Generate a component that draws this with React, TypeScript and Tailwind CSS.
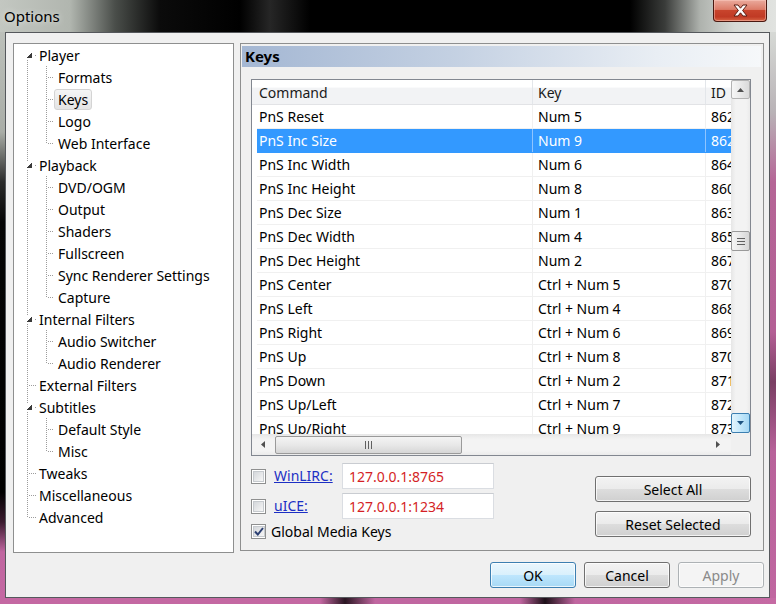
import React from "react";

type TreeNode = { label: string; children?: string[] };

const TREE: TreeNode[] = [
  { label: "Player", children: ["Formats", "Keys", "Logo", "Web Interface"] },
  { label: "Playback", children: ["DVD/OGM", "Output", "Shaders", "Fullscreen", "Sync Renderer Settings", "Capture"] },
  { label: "Internal Filters", children: ["Audio Switcher", "Audio Renderer"] },
  { label: "External Filters" },
  { label: "Subtitles", children: ["Default Style", "Misc"] },
  { label: "Tweaks" },
  { label: "Miscellaneous" },
  { label: "Advanced" },
];

interface TreeRow { label: string; child: boolean; parent: boolean; first: boolean; last: boolean; lastChild: boolean }

const treeRows: TreeRow[] = TREE.flatMap((n, i) => [
  { label: n.label, child: false, parent: !!n.children, first: i === 0, last: i === TREE.length - 1, lastChild: false },
  ...(n.children ?? []).map((c, j, arr) => ({
    label: c, child: true, parent: false, first: false, last: false, lastChild: j === arr.length - 1,
  })),
]);

const KEYS: [string, string, string][] = [
  ["PnS Reset", "Num 5", "862"],
  ["PnS Inc Size", "Num 9", "862"],
  ["PnS Inc Width", "Num 6", "864"],
  ["PnS Inc Height", "Num 8", "860"],
  ["PnS Dec Size", "Num 1", "863"],
  ["PnS Dec Width", "Num 4", "865"],
  ["PnS Dec Height", "Num 2", "867"],
  ["PnS Center", "Ctrl + Num 5", "870"],
  ["PnS Left", "Ctrl + Num 4", "868"],
  ["PnS Right", "Ctrl + Num 6", "869"],
  ["PnS Up", "Ctrl + Num 8", "870"],
  ["PnS Down", "Ctrl + Num 2", "871"],
  ["PnS Up/Left", "Ctrl + Num 7", "872"],
  ["PnS Up/Right", "Ctrl + Num 9", "873"],
];

const DOT = "#9c9c9c";

function TreeLines({ row }: { row: TreeRow }) {
  if (row.child) {
    return (
      <svg width="40" height="22" className="shrink-0" shapeRendering="crispEdges">
        <line x1="13.5" y1="0" x2="13.5" y2="22" stroke={DOT} strokeDasharray="1 1" />
        <line x1="32.5" y1="0" x2="32.5" y2={row.lastChild ? 12 : 22} stroke={DOT} strokeDasharray="1 1" />
        <line x1="34" y1="11.5" x2="40" y2="11.5" stroke={DOT} strokeDasharray="1 1" />
      </svg>
    );
  }
  if (row.parent) {
    return (
      <svg width="22" height="22" className="shrink-0" shapeRendering="crispEdges">
        {!row.first && <line x1="13.5" y1="0" x2="13.5" y2="8" stroke={DOT} strokeDasharray="1 1" />}
        <line x1="13.5" y1="16" x2="13.5" y2="22" stroke={DOT} strokeDasharray="1 1" />
        <polygon points="18,8 18,14 12,14" fill="#3a3a3a" />
        <rect x="21" y="11" width="1" height="1" fill={DOT} />
      </svg>
    );
  }
  return (
    <svg width="22" height="22" className="shrink-0" shapeRendering="crispEdges">
      <line x1="13.5" y1="0" x2="13.5" y2={row.last ? 12 : 22} stroke={DOT} strokeDasharray="1 1" />
      <line x1="15" y1="11.5" x2="22" y2="11.5" stroke={DOT} strokeDasharray="1 1" />
    </svg>
  );
}

function TreeView() {
  return (
    <div className="h-[510px] w-[221px] shrink-0 border border-[#8e8f8f] bg-white">
      {treeRows.map((r) => (
        <div key={r.label} className="flex h-[22px] items-center">
          <TreeLines row={r} />
          <span
            className={`h-[21px] whitespace-nowrap rounded-[3px] border leading-[19px] text-black ${r.child ? "px-[3px]" : "px-[2px]"} ${
              r.label === "Keys"
                ? "border-[#d4d4d4] bg-[linear-gradient(to_bottom,#f5f5f5,#e4e4e4)]"
                : "border-transparent"
            }`}
          >
            {r.label}
          </span>
        </div>
      ))}
    </div>
  );
}

function Arrow({ dir, color }: { dir: "up" | "down" | "left" | "right"; color: string }) {
  const d = {
    up: "M0 4 L3.5 0 L7 4 Z",
    down: "M0 0 L7 0 L3.5 4 Z",
    left: "M4 0 L4 7 L0 3.5 Z",
    right: "M0 0 L4 3.5 L0 7 Z",
  }[dir];
  const vertical = dir === "up" || dir === "down";
  return (
    <svg width={vertical ? 7 : 4} height={vertical ? 4 : 7}>
      <path d={d} fill={color} />
    </svg>
  );
}

function VScroll() {
  return (
    <div className="flex flex-col bg-[linear-gradient(to_right,#e6e6e6,#f3f3f3_25%,#f3f3f3_80%,#ebebeb)]">
      <div className="flex h-[19px] items-center justify-center rounded-[2px] border border-[#b3b3b3] bg-[linear-gradient(to_right,#f6f6f6,#e9e9e9_50%,#dadada)]">
        <Arrow dir="up" color="#505050" />
      </div>
      <div className="mt-[132px] flex h-[20px] items-center justify-center rounded-[2px] border border-[#9a9a9a] bg-[linear-gradient(to_right,#f4f4f4,#e8e8e8_50%,#d6d6d6)]">
        <svg width="8" height="7" shapeRendering="crispEdges">
          <path d="M0 0.5H8M0 3.5H8M0 6.5H8" stroke="#606060" />
        </svg>
      </div>
      <div className="flex-1" />
      <div className="mb-[1px] flex h-[20px] items-center justify-center rounded-[2px] border border-[#3c7fb1] bg-[linear-gradient(to_right,#e3f4fc,#c4e8fb_50%,#a6d8f4)]">
        <Arrow dir="down" color="#1d5381" />
      </div>
    </div>
  );
}

function HScroll() {
  return (
    <div className="flex items-center bg-[linear-gradient(to_bottom,#e6e6e6,#f3f3f3_25%,#f3f3f3_80%,#ebebeb)]">
      <div className="flex w-[21px] justify-center">
        <Arrow dir="left" color="#505050" />
      </div>
      <div className="ml-[2px] flex h-[18px] w-[187px] items-center justify-center rounded-[2px] border border-[#9a9a9a] bg-[linear-gradient(to_bottom,#f4f4f4,#e8e8e8_50%,#d6d6d6)]">
        <svg width="7" height="8" shapeRendering="crispEdges">
          <path d="M0.5 0V8M3.5 0V8M6.5 0V8" stroke="#606060" />
        </svg>
      </div>
      <div className="flex-1" />
      <div className="flex w-[26px] justify-center">
        <Arrow dir="right" color="#505050" />
      </div>
    </div>
  );
}

function ListView() {
  return (
    <div className="grid h-[377px] w-[500px] grid-cols-[479px_19px] grid-rows-[354px_21px] border border-[#828790] bg-white">
      <div className="overflow-hidden">
        <div className="flex h-[25px] w-[600px] border-b border-[#e2e3e6] bg-[linear-gradient(to_bottom,#ffffff_0%,#ffffff_30%,#f2f3f5_33%,#f2f3f5_100%)] leading-[25px] text-[#1a1a1a]">
          <div className="w-[281px] shrink-0 border-r border-[#e3e6ea] pl-[7px]">Command</div>
          <div className="w-[173px] shrink-0 border-r border-[#e3e6ea] pl-[5px]">Key</div>
          <div className="w-[60px] shrink-0 pl-[5px]">ID</div>
        </div>
        {KEYS.map(([cmd, key, id], i) => {
          const sel = i === 1;
          return (
            <div
              key={cmd}
              className={`ml-[5px] flex h-[24px] w-[600px] border-b leading-[23px] ${
                sel ? "border-[#3399ff] bg-[#3399ff] text-white" : "border-[#f0f0f0] text-black"
              }`}
            >
              <div className={`w-[276px] shrink-0 border-r pl-[2px] ${sel ? "border-[#8ec4ff]" : "border-[#f0f0f0]"}`}>{cmd}</div>
              <div className={`w-[173px] shrink-0 border-r pl-[5px] ${sel ? "border-[#8ec4ff]" : "border-[#f0f0f0]"}`}>{key}</div>
              <div className="w-[60px] shrink-0 pl-[5px]">{id}</div>
            </div>
          );
        })}
      </div>
      <VScroll />
      <HScroll />
      <div className="bg-[#f0f0f0]" />
    </div>
  );
}

function CheckBox({ checked = false }: { checked?: boolean }) {
  return (
    <span className="flex h-[15px] w-[15px] shrink-0 border border-[#8e8f8f] bg-white p-[1px]">
      <span className="flex flex-1 items-center justify-center border border-[#c6cace] bg-[linear-gradient(135deg,#d4d7db,#f6f6f6)]">
        {checked && (
          <svg width="10" height="9" viewBox="0 0 10 9">
            <path d="M1 4.5 L3.8 7.5 L9 1" fill="none" stroke="#2b3f72" strokeWidth="2" />
          </svg>
        )}
      </span>
    </span>
  );
}

function Field({ value }: { value: string }) {
  return (
    <div className="flex h-[26px] w-[152px] items-center border border-[#dadde2] border-t-[#c9ccd1] bg-white pl-[6px] text-[#d41f26]">
      {value}
    </div>
  );
}

function Button({ label, kind = "normal", w }: { label: string; kind?: "normal" | "default" | "disabled"; w: string }) {
  const cls =
    kind === "default"
      ? "border-[#3c7fb1] bg-[linear-gradient(to_bottom,#eaf6fd_0%,#d9f0fc_50%,#bee6fd_50%,#a7d9f5_100%)] text-black"
      : kind === "disabled"
      ? "border-[#adb2b5] bg-[#f4f4f4] text-[#8a8a8a]"
      : "border-[#707070] bg-[linear-gradient(to_bottom,#f3f3f3_0%,#ebebeb_50%,#dddddd_50%,#d0d0d0_100%)] text-black";
  return (
    <div
      className={`flex h-[26px] shrink-0 items-center justify-center rounded-[3px] border text-[14px] shadow-[inset_0_0_0_1px_rgba(255,255,255,0.75)] ${cls} ${w}`}
    >
      {label}
    </div>
  );
}

function KeysPage() {
  return (
    <div className="flex h-[508px] w-[524px] shrink-0 flex-col border border-[#8e8f8f] pt-[2px] pl-[1px] pr-[2px]">
      <div className="flex h-[21px] shrink-0 items-center bg-[linear-gradient(to_right,#a4b7d3,#c3d0e2_40%,#e9eef4_80%,#f6f8fa)] pl-[3px] text-[15px] font-bold text-black">
        Keys
      </div>
      <div className="flex flex-col pl-[9px] pr-[10px] pt-[12px]">
        <ListView />
        <div className="flex items-start">
          <div className="mt-[7px] flex flex-col gap-[4px]">
            <div className="flex items-center">
              <CheckBox />
              <span className="ml-[8px] w-[68px] leading-[18px] text-[#1c2fc4] underline">WinLIRC:</span>
              <Field value="127.0.0.1:8765" />
            </div>
            <div className="flex items-center">
              <CheckBox />
              <span className="ml-[8px] w-[68px] leading-[18px] text-[#1c2fc4] underline">uICE:</span>
              <Field value="127.0.0.1:1234" />
            </div>
            <div className="flex h-[16px] items-center">
              <CheckBox checked />
              <span className="ml-[5px]">Global Media Keys</span>
            </div>
          </div>
          <div className="ml-auto mt-[20px] flex flex-col gap-[9px]">
            <Button label="Select All" w="w-[156px]" />
            <Button label="Reset Selected" w="w-[156px]" />
          </div>
        </div>
      </div>
    </div>
  );
}

export default function App() {
  return (
    <div className="flex h-[604px] w-[776px] flex-col overflow-hidden text-[14px] [font-family:'Noto_Sans','Open_Sans',sans-serif]">
      <div className="flex h-[32px] shrink-0 items-start bg-[linear-gradient(to_right,#c3c7c1_0px,#b1b6af_70px,#4a4e4a_115px,#0b0b0b_160px,#000_240px,#262626_270px,#000_310px,#000_630px,#3a3c3a_665px,#aeb2ad_700px,#d6d9d5_735px,#e1e3e0_776px)]">
        <span className="ml-[4px] mt-[5px] text-[15px] text-black [text-shadow:0_0_6px_rgba(255,255,255,0.7)]">Options</span>
        <div className="ml-auto mr-[9px] flex h-[22px] w-[54px] items-center justify-center rounded-b-[4px] border border-t-0 border-[#4a1810] bg-[linear-gradient(to_bottom,#eaaa9c_0%,#dc7c68_45%,#c8442c_50%,#c03a24_80%,#d86444_100%)] shadow-[inset_0_0_0_1px_rgba(255,210,200,0.45)]">
          <svg width="15" height="13" viewBox="0 0 15 13">
            <path
              d="M1 1 H5 L7.5 4.2 L10 1 H14 L9.6 6.5 L14 12 H10 L7.5 8.8 L5 12 H1 L5.4 6.5 Z"
              fill="#ffffff"
              stroke="#5a1d12"
              strokeWidth="1"
              strokeLinejoin="round"
            />
          </svg>
        </div>
      </div>
      <div className="flex flex-1">
        <div className="w-[5px] shrink-0 bg-[linear-gradient(to_bottom,#bcc0ba_0px,#a9ada7_100px,#2a2a2a_150px,#050505_190px,#000_460px,#3a1a2e_490px,#c066a0_520px,#c468a2_100%)]" />
        <div className="flex flex-1 flex-col border border-[#55585c] bg-[#f0f0f0] pl-[7px] pr-[5px] pt-[10px] text-black">
          <div className="flex gap-[6px]">
            <TreeView />
            <KeysPage />
          </div>
          <div className="mt-[9px] flex justify-end gap-[8px]">
            <Button label="OK" kind="default" w="w-[86px]" />
            <Button label="Cancel" w="w-[86px]" />
            <Button label="Apply" kind="disabled" w="w-[86px]" />
          </div>
        </div>
        <div className="w-[6px] shrink-0 bg-[linear-gradient(to_bottom,#d6d9d5_0px,#b9b3b7_80px,#b56596_150px,#b45f95_300px,#7a3e63_350px,#b8629a_420px,#c066a0_100%)]" />
      </div>
      <div className="h-[6px] shrink-0 bg-[linear-gradient(to_right,#c468a2_0px,#c468a2_320px,#2a1622_345px,#c066a0_375px,#c066a0_520px,#1d1018_545px,#c066a0_575px,#c56aa3_776px)]" />
    </div>
  );
}
